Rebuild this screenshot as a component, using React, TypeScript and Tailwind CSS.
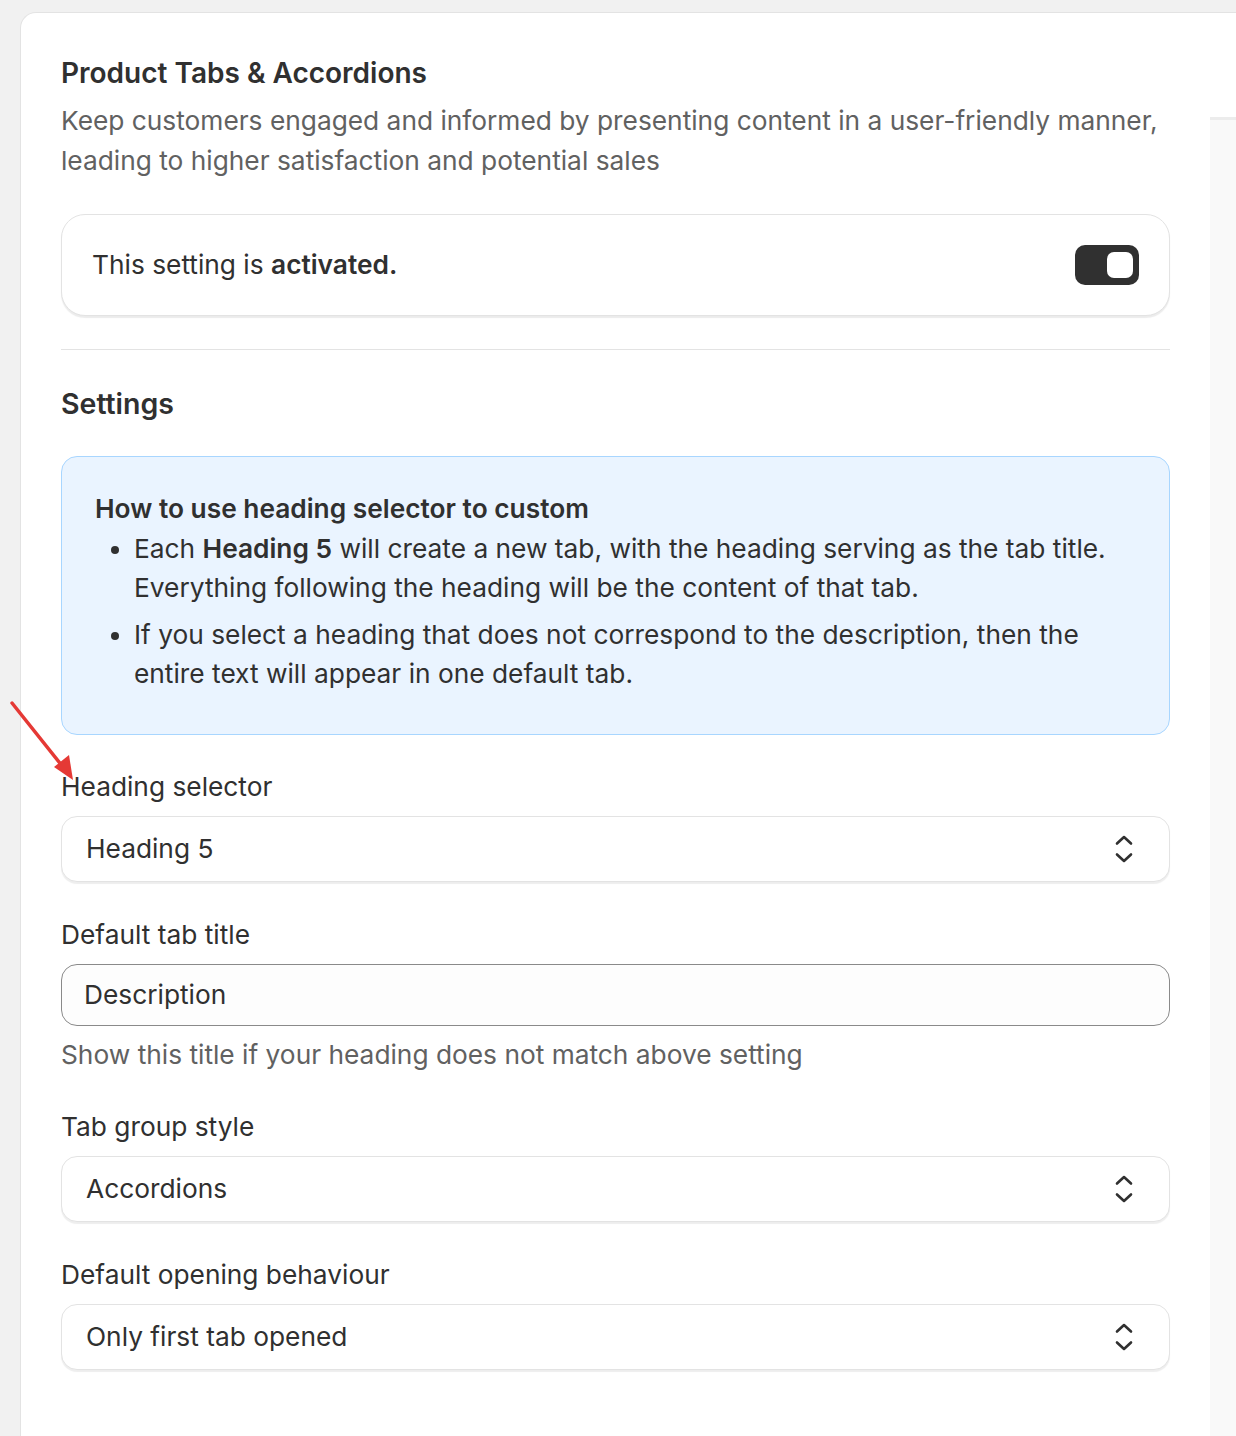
const font = { fontFamily: 'Inter, "Noto Sans", sans-serif' };

function Chevrons() {
  return (
    <svg width="18" height="30" viewBox="0 0 18 30" fill="none" stroke="#303030" strokeWidth="2.6" strokeLinecap="round" strokeLinejoin="round">
      <path d="M2 9.5 L9 3 L16 9.5" />
      <path d="M2 20.5 L9 27 L16 20.5" />
    </svg>
  );
}

function SelectBox({ value, className }: { value: string; className?: string }) {
  return (
    <div
      className={`flex h-[66px] items-center justify-between rounded-[16px] border border-[#e3e3e3] bg-white pl-[24px] pr-[36px] shadow-[0_2px_1px_rgba(0,0,0,0.07)] ${className ?? ''}`}
    >
      <span className="text-[26.3px] leading-[40px] text-[#303030]">{value}</span>
      <Chevrons />
    </div>
  );
}

function Label({ children, className }: { children: React.ReactNode; className?: string }) {
  return <div className={`text-[26.3px] leading-[40px] text-[#303030] ${className ?? ''}`}>{children}</div>;
}

export default function App() {
  return (
    <div className="relative h-[1436px] w-[1236px] overflow-hidden bg-[#f1f1f1]" style={font}>
      <div className="ml-[20px] mt-[12px] flex w-[1300px] rounded-tl-[16px] border-l border-t border-[#e3e3e3] bg-white">
        {/* main column */}
        <div className="w-[1189px] shrink-0 px-[40px] pt-[40px] pb-[80px]">
          <h1 className="text-[28px] font-semibold leading-[40px] text-[#303030]">Product Tabs &amp; Accordions</h1>
          <p className="mt-[8px] text-[26.3px] leading-[40px] text-[#616161]">
            Keep customers engaged and informed by presenting content in a user-friendly manner, leading to higher satisfaction and potential sales
          </p>

          <div className="mt-[33px] flex h-[102px] items-center justify-between rounded-[24px] border border-[#e3e3e3] bg-white pl-[30px] pr-[30px] shadow-[0_2px_1px_rgba(0,0,0,0.08)]">
            <span className="text-[26.3px] leading-[40px] text-[#303030]">
              This setting is <span className="font-semibold">activated.</span>
            </span>
            <div className="flex h-[40px] w-[64px] items-center justify-end rounded-[10px] bg-[#303030] pr-[6px]">
              <div className="h-[26px] w-[26px] rounded-[7px] bg-white" />
            </div>
          </div>

          <div className="mt-[33px] h-px bg-[#e3e3e3]" />

          <h2 className="mt-[34px] text-[28.5px] font-semibold leading-[40px] text-[#303030]">Settings</h2>

          <div className="mt-[32px] rounded-[16px] border border-[#a8d6ff] bg-[#eaf4ff] pl-[33px] pr-[32px] pt-[32px] pb-[41px] text-[26.3px] text-[#303030]">
            <div className="font-semibold leading-[40px]">How to use heading selector to custom</div>
            <ul className="list-disc pl-[39px] leading-[39px]">
              <li>
                Each <span className="font-semibold">Heading 5</span> will create a new tab, with the heading serving as the tab title. Everything following the heading will be the content of that tab.
              </li>
              <li className="mt-[8px]">
                If you select a heading that does not correspond to the description, then the entire text will appear in one default tab.
              </li>
            </ul>
          </div>

          <Label className="mt-[32px]">Heading selector</Label>
          <SelectBox value="Heading 5" className="mt-[9px]" />

          <Label className="mt-[33px]">Default tab title</Label>
          <div className="mt-[9px] flex h-[62px] items-center rounded-[16px] border border-[#8a8a8a] bg-[#fdfdfd] pl-[22px]">
            <span className="text-[26.3px] leading-[40px] text-[#303030]">Description</span>
          </div>
          <div className="mt-[9px] text-[26.3px] leading-[40px] text-[#616161]">Show this title if your heading does not match above setting</div>

          <Label className="mt-[32px]">Tab group style</Label>
          <SelectBox value="Accordions" className="mt-[9px]" />

          <Label className="mt-[33px]">Default opening behaviour</Label>
          <SelectBox value="Only first tab opened" className="mt-[9px]" />
        </div>

        {/* right side panel */}
        <div className="flex-1 pt-[104px]">
          <div className="h-[1400px] border-t-[3px] border-[#ececec] bg-[#f9f9f9]" />
        </div>
      </div>

      {/* annotation arrow */}
      <svg className="pointer-events-none absolute left-0 top-0" width="90" height="800" viewBox="0 0 90 800">
        <line x1="12" y1="703" x2="63" y2="767" stroke="#e53935" strokeWidth="3.5" strokeLinecap="round" />
        <polygon points="73,780 54,767 69,755" fill="#e53935" />
      </svg>
    </div>
  );
}
